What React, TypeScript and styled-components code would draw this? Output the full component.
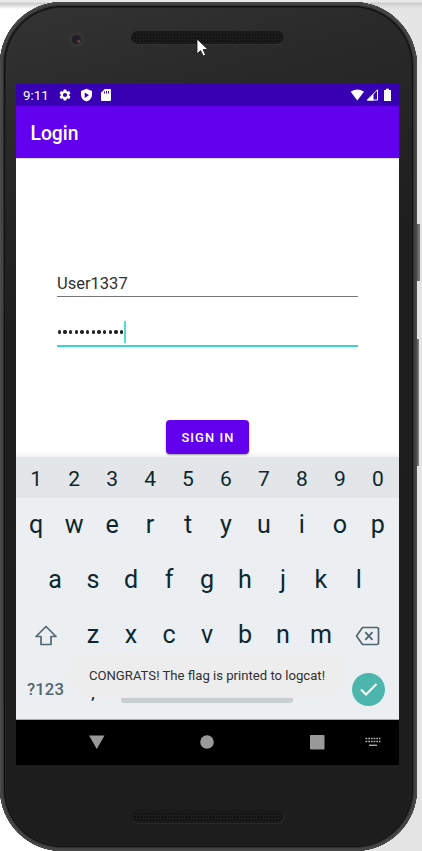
import React from "react";
import styled, { createGlobalStyle } from "styled-components";

const GlobalStyle = createGlobalStyle`
  *, *::before, *::after { box-sizing: border-box; }
  body { margin: 0; overflow: hidden; font-family: Roboto, sans-serif; }
  svg { display: block; flex: none; }
`;

const Desktop = styled.main`
  width: 422px;
  height: 851px;
  padding-top: 2px;
  overflow: hidden;
  background:
    linear-gradient(#e9e9e9 0 2px, #c9cbc9 3px, #d8d8d8 5px, transparent 9px),
    linear-gradient(90deg, #fff 0 210px, #e5e5e5 210px);
`;

const Phone = styled.div`
  position: relative;
  width: 417px;
  height: 849px;
  padding: 0 0 0 16px;
  border-radius: 62px 64px 62px 62px;
  background: linear-gradient(165deg, #343434 0, #292929 14%, #1e1e1e 35%, #1d1d1e 100%);
  box-shadow:
    inset 0 0 0 1px #4c4c4c,
    inset 0 0 0 3px #434142,
    inset 0 0 0 4px #303030,
    inset 0 0 0 5px #101010,
    inset 0 0 0 6px #222;
`;

const SideButton = styled.i<{ $top: number; $height: number; $width: number }>`
  position: absolute;
  left: 417px;
  top: ${(p) => p.$top}px;
  width: ${(p) => p.$width}px;
  height: ${(p) => p.$height}px;
  background: linear-gradient(90deg, #4d4b4c, #858585 70%, #555);
`;

const TopBezel = styled.div`
  display: flex;
  align-items: flex-start;
  height: 82px;
  padding: 29px 0 0 52px;
`;

const Camera = styled.div`
  display: grid;
  place-items: center;
  width: 17px;
  height: 17px;
  margin-right: 46px;
  border-radius: 50%;
  background: #353435;
  &::after {
    content: "";
    width: 9px;
    height: 9px;
    border-radius: 50%;
    background: radial-gradient(circle at 75% 70%, #7d5059 0 0.6px, #292229 1.6px, #1f1c23 60%);
  }
`;

const Grille = styled.div`
  width: 153px;
  height: 13px;
  border-radius: 7px;
  padding: 1.5px 3px;
  background: #191919;
  box-shadow: 0.5px 0.5px 0 #393939;
  &::after {
    content: "";
    display: block;
    height: 10px;
    background: radial-gradient(circle, #050505 0 0.8px, #252525 1.2px, transparent 1.5px) 0 0 / 3px 3.3px;
  }
`;

const Screen = styled.div`
  display: flex;
  flex-direction: column;
  width: 383px;
  height: 681px;
  background: #fff;
`;

const StatusBar = styled.header`
  display: flex;
  align-items: center;
  height: 22px;
  padding: 0 7px;
  color: #fff;
  background: #3700b3;
`;

const Clock = styled.span`
  width: 35px;
  padding-top: 1px;
  font-size: 13.3px;
  line-height: 20px;
`;

const StatusIcons = styled.div`
  display: flex;
  align-items: center;
  gap: 7.5px;
`;

const SignalIcons = styled(StatusIcons)`
  margin-left: auto;
  gap: 1px;
  svg:last-child { margin-left: 3px; }
`;

const AppBar = styled.div`
  display: flex;
  align-items: center;
  height: 52px;
  padding: 2px 14.5px 0;
  color: #fff;
  background: #6200ee;
  font-size: 19.3px;
  font-weight: 500;
`;

const Form = styled.section`
  display: flex;
  flex-direction: column;
  align-items: center;
  height: 299px;
  padding: 110px 0 0;
  background: linear-gradient(#ddd 0 1px, #fff 1px 294px, #f1f1f1);
`;

const Field = styled.div<{ $active?: boolean }>`
  display: flex;
  align-items: center;
  width: 301px;
  height: ${(p) => (p.$active ? 50 : 29)}px;
  padding-top: ${(p) => (p.$active ? 22 : 3)}px;
  border-bottom: ${(p) => (p.$active ? "2px solid #35d6c8" : "1px solid #777")};
  color: #303030;
  font-size: 16.5px;
`;

const Dots = styled.div`
  display: flex;
  gap: 2.3px;
  padding: 0 0 0 0.5px;
  i {
    width: 3.4px;
    height: 3.4px;
    border-radius: 50%;
    background: #222;
  }
`;

const Caret = styled.i`
  width: 2px;
  height: 22px;
  margin: 0 0 1px 0.3px;
  background: #4addd0;
`;

const SignIn = styled.button`
  width: 83px;
  height: 34px;
  margin: 73px 0 0 0;
  padding: 1px 0 0 1px;
  border: 0;
  border-radius: 4px;
  color: #fff;
  background: #6200ee;
  box-shadow: 0 1px 2px #0006;
  font: 500 12.9px Roboto, sans-serif;
  letter-spacing: 1.1px;
`;

const Keyboard = styled.section`
  position: relative;
  display: flex;
  flex-direction: column;
  height: 263px;
  color: #0d272f;
  background: #ebeff2;
  border-bottom: 1px solid #aaa;
`;

const KeyRow = styled.div<{ $numbers?: boolean }>`
  display: flex;
  align-items: center;
  justify-content: center;
  height: ${(p) => (p.$numbers ? 41 : 55)}px;
  padding: ${(p) => (p.$numbers ? "3px 1px 0 0" : "0 1px 2px 0")};
  background: ${(p) => (p.$numbers ? "#e2e6e9" : "transparent")};
  font-size: ${(p) => (p.$numbers ? 21 : 25.1)}px;
`;

const Key = styled.span`
  width: 37.97px;
  text-align: center;
`;

const IconKey = styled.span<{ $right?: boolean }>`
  display: flex;
  justify-content: ${(p) => (p.$right ? "flex-end" : "flex-start")};
  width: 56px;
  padding: ${(p) => (p.$right ? "3px 15.5px 0 0" : "2px 0 0 16px")};
`;

const BottomRow = styled.div`
  display: flex;
  align-items: center;
  height: 52px;
  padding-left: 11px;
`;

const SymbolKey = styled.span`
  width: 62px;
  color: #536670;
  font-size: 16.7px;
  font-weight: 500;
  letter-spacing: 0.1px;
`;

const Punctuation = styled.span`
  width: 32px;
  padding: 3px 0 0 2px;
  font-size: 20px;
`;

const SpaceBar = styled.div`
  width: 171.5px;
  height: 39px;
  margin-top: -12px;
  border-radius: 3px;
  background: #e9e9e9;
  border-bottom: 5px solid #c9ced1;
`;

const Period = styled.span`
  width: 59px;
  padding: 0 0 3px 26px;
  font-size: 18px;
  color: #9aa1a5;
`;

const Enter = styled.div`
  display: grid;
  place-items: center;
  width: 33px;
  height: 33px;
  border-radius: 50%;
  background: #4db6ac;
`;

const Toast = styled.div`
  position: absolute;
  left: 50px;
  top: 196px;
  display: flex;
  align-items: center;
  justify-content: center;
  width: 282px;
  height: 44px;
  padding-top: 1px;
  border-radius: 22px;
  color: #303030;
  background: #ededed;
  font-size: 13.13px;
  white-space: nowrap;
`;

const NavBar = styled.nav`
  display: flex;
  align-items: center;
  height: 45px;
  padding: 0 0 1px 73px;
  background: #000;
`;

const NavItem = styled.span<{ $space: number }>`
  display: flex;
  width: ${(p) => p.$space}px;
`;

const BottomBezel = styled.div`
  padding: 45px 0 0 115px;
`;

const Pointer = styled.svg`
  position: absolute;
  left: 196px;
  top: 35px;
`;

const Gear = () => (
  <svg width="14" height="14" viewBox="0 0 24 24" fill="currentColor">
    <path d="M19.14 12.94c.04-.3.06-.61.06-.94s-.02-.64-.07-.94l2.03-1.58a.49.49 0 0 0 .12-.61l-1.92-3.32a.49.49 0 0 0-.59-.22l-2.39.96a7 7 0 0 0-1.62-.94l-.36-2.54A.48.48 0 0 0 13.92 2.4h-3.84a.48.48 0 0 0-.47.41l-.36 2.54a7 7 0 0 0-1.62.94l-2.39-.96a.48.48 0 0 0-.59.22L2.74 8.87a.48.48 0 0 0 .12.61l2.03 1.58a6 6 0 0 0 0 1.88l-2.03 1.58a.49.49 0 0 0-.12.61l1.92 3.32c.12.22.37.29.59.22l2.39-.96c.5.38 1.03.7 1.62.94l.36 2.54c.05.24.24.41.48.41h3.84c.24 0 .44-.17.47-.41l.36-2.54a7 7 0 0 0 1.62-.94l2.39.96c.22.08.47 0 .59-.22l1.92-3.32a.48.48 0 0 0-.12-.61zM12 15.6a3.6 3.6 0 1 1 0-7.2 3.6 3.6 0 0 1 0 7.2z" />
  </svg>
);

const Shield = () => (
  <svg width="13" height="14" viewBox="0 0 13 14" fill="currentColor" fillRule="evenodd">
    <path d="M6.5.8 12 3v4.1c0 2.9-2.1 5.3-5.500 6.500C3.100 12.400 1 10 1 7.100V3zM4.700 4.500v5.500l4.300-2.700z" />
  </svg>
);

const SdCard = () => (
  <svg width="12" height="14" viewBox="0 0 12 14" fill="currentColor" fillRule="evenodd">
    <path d="M4.700 1H10q1 0 1 1v10q0 1-1 1H2q-1 0-1-1V4.700zM4 3.500v2h1v-2zM6 3v2.500h1V3zm2 0v2.500h1V3z" />
  </svg>
);

const rows = ["qwertyuiop", "asdfghjkl"];

export default function App() {
  return (
    <>
      <GlobalStyle />
      <Desktop>
        <Phone>
          <SideButton $top={222} $height={57} $width={3} />
          <SideButton $top={337} $height={127} $width={2} />
          <TopBezel>
            <Camera />
            <Grille />
          </TopBezel>
          <Screen>
            <StatusBar>
              <Clock>9:11</Clock>
              <StatusIcons>
                <Gear />
                <Shield />
                <SdCard />
              </StatusIcons>
              <SignalIcons>
                <svg width="15" height="14" viewBox="0 0 15 14" fill="currentColor">
                  <path d="M.7 3.800Q7.300-1 14 3.800L7.300 12.500z" />
                </svg>
                <svg width="13" height="14" viewBox="0 0 13 14" fill="none" stroke="currentColor">
                  <path d="M1.300 12 11.500 1.800V12z" strokeWidth="1" />
                  <path d="M1 12.500 7.500 6v6.500z" fill="currentColor" stroke="none" />
                </svg>
                <svg width="9" height="14" viewBox="0 0 9 14" fill="currentColor">
                  <path d="M3 .7h3v1.300h1.500q.5 0 .5.500v10q0 .5-.5.500h-6q-.5 0-.5-.5v-10q0-.5.500-.5H3z" />
                </svg>
              </SignalIcons>
            </StatusBar>
            <AppBar>Login</AppBar>
            <Form>
              <Field>User1337</Field>
              <Field $active>
                <Dots>
                  {Array.from({ length: 12 }, (_, i) => <i key={i} />)}
                </Dots>
                <Caret />
              </Field>
              <SignIn>SIGN IN</SignIn>
            </Form>
            <Keyboard>
              <KeyRow $numbers>
                {[..."1234567890"].map((k) => <Key key={k}>{k}</Key>)}
              </KeyRow>
              {rows.map((row) => (
                <KeyRow key={row}>
                  {[...row].map((k) => <Key key={k}>{k}</Key>)}
                </KeyRow>
              ))}
              <KeyRow>
                <IconKey>
                  <svg width="24" height="24" viewBox="0 0 24 24" fill="none" stroke="#536670" strokeWidth="1.7" strokeLinejoin="round">
                    <path d="M12 2.500 2 12.500H7v8h10v-8h5z" />
                  </svg>
                </IconKey>
                {[..."zxcvbnm"].map((k) => <Key key={k}>{k}</Key>)}
                <IconKey $right>
                  <svg width="25" height="20" viewBox="0 0 25 20" fill="none" stroke="#536670" strokeWidth="1.7" strokeLinejoin="round">
                    <path d="M7.500 1.500H22q1.500 0 1.500 1.500v14q0 1.500-1.500 1.500H7.500L1.500 10z" />
                    <path d="m10.300 6.200 7.200 7.600m0-7.600-7.200 7.600" strokeWidth="1.900" />
                  </svg>
                </IconKey>
              </KeyRow>
              <BottomRow>
                <SymbolKey>?123</SymbolKey>
                <Punctuation>,</Punctuation>
                <SpaceBar />
                <Period>.</Period>
                <Enter>
                  <svg width="19" height="15" viewBox="0 0 19 15" fill="none" stroke="#fff" strokeWidth="2">
                    <path d="m2 7.500 5 5L17.500 2" />
                  </svg>
                </Enter>
              </BottomRow>
              <Toast>CONGRATS! The flag is printed to logcat!</Toast>
            </Keyboard>
            <NavBar>
              <NavItem $space={111}>
                <svg width="16" height="15" viewBox="0 0 16 15" fill="#999">
                  <path d="M0 .5h15.500L7.800 14z" />
                </svg>
              </NavItem>
              <NavItem $space={110}>
                <svg width="14" height="14"><circle cx="7" cy="7" r="6.800" fill="#999" /></svg>
              </NavItem>
              <NavItem $space={55}>
                <svg width="15" height="15"><rect width="14.500" height="14.500" rx=".8" fill="#999" /></svg>
              </NavItem>
              <svg width="16" height="12" viewBox="0 0 16 12" fill="none" stroke="#aaa">
                <path d="M.5 2.500h15M.5 5.500h15" strokeWidth="1.600" strokeDasharray="1.800 .9" />
                <path d="M4 9.300h8" strokeWidth="1.400" />
              </svg>
            </NavBar>
          </Screen>
          <BottomBezel>
            <Grille />
          </BottomBezel>
          <Pointer width="14" height="20" viewBox="0 0 14 20" fill="#fff" stroke="#111" strokeWidth=".8">
            <path d="M1 2v15l3.500-3.400L7.300 19l2.300-1.100-2.500-5.300H12z" />
          </Pointer>
        </Phone>
      </Desktop>
    </>
  );
}
